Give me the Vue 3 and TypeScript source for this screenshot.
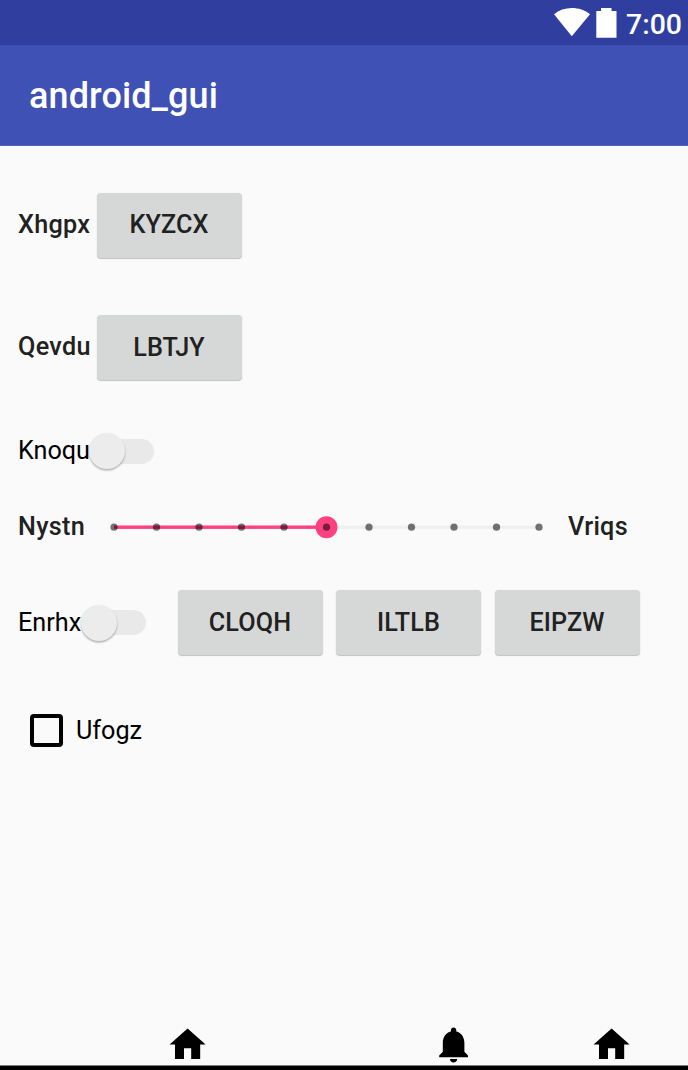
<script setup lang="ts">
const singles = [
  { label: 'Xhgpx', action: 'KYZCX' },
  { label: 'Qevdu', action: 'LBTJY' },
]
const actions: string[] = ['CLOQH', 'ILTLB', 'EIPZW']
const ticks: number[] = Array.from({ length: 11 }, (_, i) => 4 + i * 42.5)
const value = 5
const homePath = 'M10 20v-6h4v6h5v-8h3L12 3 2 12h3v8z'
const bellPath =
  'M12 22c1.1 0 2-.9 2-2h-4c0 1.1.89 2 2 2zm6-6v-5c0-3.07-1.64-5.64-4.5-6.32V4c0-.83-.67-1.5-1.5-1.5s-1.5.67-1.5 1.5v.68C7.63 5.36 6 7.92 6 11v5l-2 2v1h16v-1l-2-2z'
</script>

<template>
  <div class="screen">
    <header class="status">
      <svg class="wifi" width="36" height="29" viewBox="0 0 36 29">
        <path d="M0 6.3C5 2 11 0 17.800 0S31 2 36 6.300L17.800 28.300z" fill="#fff" />
      </svg>
      <svg class="battery" width="21" height="30" viewBox="0 0 21 30">
        <path d="M5 0h10.500v3h5v26.700H.3V3H5z" fill="#fff" />
      </svg>
      <span class="clock">7:00</span>
    </header>
    <div class="appbar"><h1>android_gui</h1></div>

    <main>
      <div v-for="s in singles" :key="s.label" class="row single">
        <span class="label strong">{{ s.label }}</span>
        <button class="btn">{{ s.action }}</button>
      </div>

      <div class="row switch-row">
        <span class="label switch-label">Knoqu</span>
        <span class="switch"><i class="thumb"></i></span>
      </div>

      <div class="row slider-row">
        <span class="label strong from">Nystn</span>
        <svg class="slider" width="434" height="24" viewBox="0 0 434 24">
          <rect x="4" y="10.500" width="425" height="3.400" fill="#efefef" />
          <rect x="4" y="10.500" :width="value * 42.5" height="3.400" fill="#ff4081" />
          <circle :cx="ticks[value]" cy="12.200" r="11" fill="#ff4081" />
          <circle v-for="x in ticks" :key="x" :cx="x" cy="12.200" r="3.600" fill="#000" fill-opacity=".54" />
        </svg>
        <span class="label strong to">Vriqs</span>
      </div>

      <div class="row multi">
        <span class="label switch-label short">Enrhx</span>
        <span class="switch"><i class="thumb"></i></span>
        <div class="group">
          <button v-for="a in actions" :key="a" class="btn">{{ a }}</button>
        </div>
      </div>

      <div class="row check-row">
        <span class="box"></span>
        <span class="label check-label">Ufogz</span>
      </div>
    </main>

    <nav>
      <svg class="icon" viewBox="0 0 24 24"><path :d="homePath" /></svg>
      <svg class="icon bell" viewBox="0 0 24 24"><path :d="bellPath" /></svg>
      <svg class="icon last" viewBox="0 0 24 24"><path :d="homePath" /></svg>
    </nav>
    <div class="edge"></div>
  </div>
</template>

<style>
body {
  margin: 0;
  background: #fafafa;
}
</style>

<style scoped>
.screen {
  width: 688px;
  height: 1070px;
  overflow: hidden;
  display: flex;
  flex-direction: column;
  background: #fafafa;
  font-family: Roboto, sans-serif;
  color: #000;
}
.status {
  flex: none;
  height: 45px;
  box-sizing: border-box;
  padding-right: 6px;
  display: flex;
  justify-content: flex-end;
  align-items: flex-start;
  background: #303f9f;
}
.wifi {
  margin: 8px 6px 0 0;
}
.battery {
  margin: 8px 9px 0 0;
}
.clock {
  margin-top: 8px;
  font-size: 28.4px;
  line-height: 34px;
  font-weight: 500;
  color: #fff;
}
.appbar {
  flex: none;
  box-sizing: border-box;
  height: 101px;
  display: flex;
  align-items: center;
  padding-left: 29px;
  background: #3f51b5;
  box-shadow: inset 0 -1px #5464bd;
}
h1 {
  margin: 0;
  font-size: 36px;
  line-height: 42px;
  font-weight: 500;
  letter-spacing: 0.12px;
  color: #fff;
}
main {
  flex: 1;
  padding: 46px 0 0 18px;
}
.row {
  display: flex;
  align-items: center;
}
.label {
  flex: none;
  font-size: 25.2px;
  line-height: 30px;
  white-space: nowrap;
}
.strong {
  font-weight: 500;
  letter-spacing: 0.3px;
  color: #212121;
}
.single {
  height: 66px;
  margin-bottom: 56.5px;
}
.single .label {
  width: 78.5px;
  margin-top: -1px;
}
.btn {
  flex: none;
  width: 145px;
  height: 65px;
  padding: 0;
  border: 0;
  border-radius: 4px;
  background: #d6d8d7;
  box-shadow: 0 1px 1px rgba(0, 0, 0, 0.22), 0 0 1px rgba(0, 0, 0, 0.12);
  font: 500 25.2px/30px Roboto, sans-serif;
  letter-spacing: 0.1px;
  color: #212121;
}
.switch-row {
  height: 38px;
  margin-top: -5px;
}
.switch-label {
  width: 71px;
}
.short {
  width: 63px;
}
.switch {
  flex: none;
  display: flex;
  align-items: center;
  width: 47px;
  height: 25px;
  margin-left: 18px;
  border-radius: 13px;
  background: #e9e9e9;
}
.thumb {
  flex: none;
  width: 36px;
  height: 36px;
  margin-left: -18px;
  border-radius: 50%;
  background: #ececec;
  box-shadow: 0 1.500px 2px rgba(0, 0, 0, 0.3);
}
.slider-row {
  height: 24px;
  margin-top: 45px;
}
.from {
  width: 92px;
}
.slider {
  flex: none;
}
.to {
  margin-left: 24px;
}
.multi {
  height: 66px;
  margin-top: 50.5px;
}
.group {
  display: flex;
  gap: 13.5px;
  margin-left: 31.5px;
}
.check-row {
  height: 34px;
  margin: 58px 0 0 12.3px;
}
.box {
  box-sizing: border-box;
  width: 33px;
  height: 33px;
  border: 4px solid #000;
  border-radius: 4px;
}
.check-label {
  margin: 1px 0 0 12.7px;
}
nav {
  flex: none;
  height: 43px;
  display: flex;
  align-items: flex-end;
  padding-left: 165.5px;
}
.icon {
  flex: none;
  width: 43.2px;
  height: 43.2px;
  margin-bottom: -0.7px;
}
.bell {
  margin-left: 223px;
}
.last {
  margin-left: 115px;
}
.edge {
  flex: none;
  height: 4px;
  border-top: 1px solid #7d7d7d;
  background: #000;
}
</style>
